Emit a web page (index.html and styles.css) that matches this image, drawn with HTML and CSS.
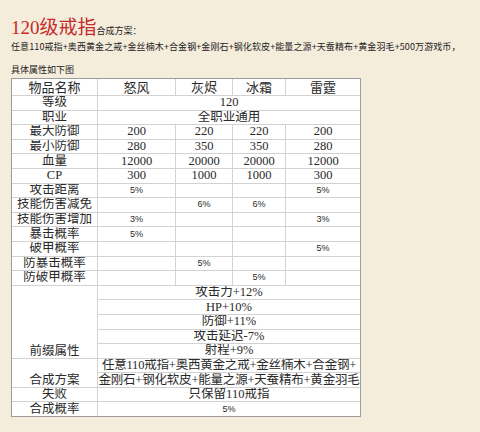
FILE: index.html
```html
<!DOCTYPE html>
<html lang="zh-CN">
<head>
<meta charset="utf-8">
<title>120级戒指</title>
<link rel="stylesheet" href="styles.css">
</head>
<body>
<div class="page">
  <h1 class="title"><span class="big">120级戒指</span><span class="sub">合成方案：</span></h1>
  <p class="recipe">任意110戒指+奥西黄金之戒+金丝楠木+合金钢+金刚石+钢化软皮+能量之源+天蚕精布+黄金羽毛+500万游戏币，</p>
  <p class="note">具体属性如下图</p>
  <table class="attrs">
    <colgroup>
      <col class="c1"><col class="c2"><col class="c3"><col class="c4"><col class="c5">
    </colgroup>
    <tr class="head"><td>物品名称</td><td>怒风</td><td>灰烬</td><td>冰霜</td><td>雷霆</td></tr>
    <tr><td>等级</td><td colspan="4">120</td></tr>
    <tr><td>职业</td><td colspan="4">全职业通用</td></tr>
    <tr><td>最大防御</td><td>200</td><td>220</td><td>220</td><td>200</td></tr>
    <tr><td>最小防御</td><td>280</td><td>350</td><td>350</td><td>280</td></tr>
    <tr><td>血量</td><td>12000</td><td>20000</td><td>20000</td><td>12000</td></tr>
    <tr><td>CP</td><td>300</td><td>1000</td><td>1000</td><td>300</td></tr>
    <tr><td>攻击距离</td><td class="pc">5%</td><td></td><td></td><td class="pc">5%</td></tr>
    <tr><td>技能伤害减免</td><td></td><td class="pc">6%</td><td class="pc">6%</td><td></td></tr>
    <tr><td>技能伤害增加</td><td class="pc">3%</td><td></td><td></td><td class="pc">3%</td></tr>
    <tr><td>暴击概率</td><td class="pc">5%</td><td></td><td></td><td></td></tr>
    <tr><td>破甲概率</td><td></td><td></td><td></td><td class="pc">5%</td></tr>
    <tr><td>防暴击概率</td><td></td><td class="pc">5%</td><td></td><td></td></tr>
    <tr><td>防破甲概率</td><td></td><td></td><td class="pc">5%</td><td></td></tr>
    <tr><td rowspan="5" class="bottom">前缀属性</td><td colspan="4">攻击力+12%</td></tr>
    <tr><td colspan="4">HP+10%</td></tr>
    <tr><td colspan="4">防御+11%</td></tr>
    <tr><td colspan="4">攻击延迟-7%</td></tr>
    <tr><td colspan="4">射程+9%</td></tr>
    <tr><td rowspan="2" class="bottom">合成方案</td><td colspan="4" class="long">任意110戒指+奥西黄金之戒+金丝楠木+合金钢+</td></tr>
    <tr><td colspan="4" class="long">金刚石+钢化软皮+能量之源+天蚕精布+黄金羽毛</td></tr>
    <tr><td>失败</td><td colspan="4">只保留110戒指</td></tr>
    <tr><td>合成概率</td><td colspan="4" class="pc">5%</td></tr>
  </table>
</div>
</body>
</html>
```
FILE: styles.css
```css
html, body {
  margin: 0;
  padding: 0;
  background: #f5eddc;
}

.page {
  padding: 12px 0 0 11px;
  font-family: "Noto Sans CJK SC", sans-serif;
  color: #222;
}

.title {
  margin: 0;
  font-weight: normal;
  font-size: 19px;
  line-height: 27px;
  height: 27px;
}

.title .big {
  font-family: "Liberation Serif", "Noto Sans CJK SC", serif;
  font-size: 19px;
  color: #c62a2c;
}

.title .sub {
  font-size: 9px;
  color: #222;
}

.recipe {
  margin: 2px 0 0 0;
  font-size: 9px;
  line-height: 12px;
  white-space: nowrap;
  letter-spacing: 0.1px;
}

.note {
  margin: 11px 0 0 0;
  font-size: 9px;
  line-height: 12px;
}

.attrs {
  margin-top: 2px;
  border-collapse: collapse;
  table-layout: fixed;
  width: 349px;
  background: #fff;
  outline: 1px solid #9c9c9c;
  outline-offset: -1px;
  font-family: "Liberation Serif", "Noto Sans CJK SC", serif;
  font-size: 12.5px;
  color: #2a2a2a;
}

.attrs col.c1 { width: 86px; }
.attrs col.c2 { width: 78px; }
.attrs col.c3 { width: 57px; }
.attrs col.c4 { width: 53px; }
.attrs col.c5 { width: 75px; }

.attrs td {
  border: 1px solid #d2d2d2;
  padding: 0;
  height: 13.6px;
  line-height: 13px;
  text-align: center;
  vertical-align: middle;
  white-space: nowrap;
  overflow: hidden;
}

.attrs tr.head td {
  height: 16px;
  font-size: 13px;
}

.attrs td.bottom {
  vertical-align: bottom;
}

.attrs td.pc {
  font-family: "Liberation Sans", sans-serif;
  font-size: 9px;
}

.attrs td.long {
  letter-spacing: -0.2px;
}
```
